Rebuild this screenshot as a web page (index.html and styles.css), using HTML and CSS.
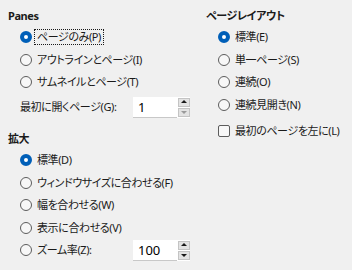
FILE: index.html
```html
<!DOCTYPE html>
<html lang="ja">
<head>
  <meta charset="UTF-8">
  <title>表示オプション</title>
  <link rel="stylesheet" href="styles.css">
</head>
<body>
  <div class="dialog">
    <div class="col">
      <div class="group">
        <h3>Panes</h3>
        <label class="opt"><span class="radio on"></span><span class="txt focus">ページのみ(P)</span></label>
        <label class="opt"><span class="radio"></span><span class="txt">アウトラインとページ(I)</span></label>
        <label class="opt"><span class="radio"></span><span class="txt">サムネイルとページ(T)</span></label>
        <div class="opt spin-row">
          <span class="txt">最初に開くページ(G):</span>
          <div class="spin">
            <span class="spin-val">1</span>
            <span class="spin-btns">
              <span class="up"></span>
              <span class="down off"></span>
            </span>
          </div>
        </div>
      </div>
      <div class="group zoom">
        <h3>拡大</h3>
        <label class="opt"><span class="radio on"></span><span class="txt">標準(D)</span></label>
        <label class="opt"><span class="radio"></span><span class="txt">ウィンドウサイズに合わせる(F)</span></label>
        <label class="opt"><span class="radio"></span><span class="txt">幅を合わせる(W)</span></label>
        <label class="opt"><span class="radio"></span><span class="txt">表示に合わせる(V)</span></label>
        <label class="opt"><span class="radio"></span><span class="txt">ズーム率(Z):</span>
          <div class="spin">
            <span class="spin-val">100</span>
            <span class="spin-btns">
              <span class="up"></span>
              <span class="down"></span>
            </span>
          </div>
        </label>
      </div>
    </div>
    <div class="col">
      <div class="group">
        <h3>ページレイアウト</h3>
        <label class="opt"><span class="radio on"></span><span class="txt">標準(E)</span></label>
        <label class="opt"><span class="radio"></span><span class="txt">単一ページ(S)</span></label>
        <label class="opt"><span class="radio"></span><span class="txt">連続(O)</span></label>
        <label class="opt"><span class="radio"></span><span class="txt">連続見開き(N)</span></label>
        <label class="opt check-row"><span class="check"></span><span class="txt">最初のページを左に(L)</span></label>
      </div>
    </div>
  </div>
</body>
</html>
```

FILE: styles.css
```css
/* dialog base */
body {
  margin: 0;
  padding: 8px;
  background: #f0f0f0;
  color: #1a1a1a;
  font-family: "Noto Sans", "Noto Sans CJK JP", sans-serif;
  font-size: 11px;
  letter-spacing: -0.4px;
  font-feature-settings: "palt";
}
.dialog {
  display: grid;
  grid-template-columns: 182px 1fr;
  column-gap: 16px;
}
h3 {
  margin: 0 0 2px 0;
  height: 16px;
  line-height: 16px;
  font-size: 11px;
  font-weight: bold;
}
.zoom {
  margin-top: 13px;
}

/* option rows */
.opt {
  display: flex;
  align-items: center;
  height: 22.5px;
  padding-left: 12px;
}
.txt {
  line-height: 14px;
  white-space: nowrap;
}
.focus {
  outline: 1px dotted #1a1a1a;
  outline-offset: 0;
  padding: 0 2px;
  margin-left: -2px;
}
.radio {
  width: 10px;
  height: 10px;
  border: 1px solid #5c5c5c;
  border-radius: 50%;
  background: #f7f7f7;
  margin-right: 5px;
  flex-shrink: 0;
}
.radio.on {
  width: 4px;
  height: 4px;
  border: 4px solid #005fb8;
  background: #ffffff;
}
.check {
  width: 10px;
  height: 10px;
  border: 1px solid #5c5c5c;
  border-radius: 2px;
  background: #f7f7f7;
  margin-right: 5px;
}
.check-row {
  margin-top: 4px;
  height: 22px;
}
.spin-row {
  height: 22px;
  margin-top: 2.5px;
}

/* number spinner */
.spin {
  margin-left: auto;
  display: flex;
  height: 21px;
}
.spin-val {
  width: 39px;
  padding-left: 5px;
  background: #ffffff;
  border-bottom: 1px solid #c8c8c8;
  line-height: 20px;
  font-size: 13px;
  letter-spacing: 0;
  color: #000;
}
.spin-btns {
  width: 13px;
  display: flex;
  flex-direction: column;
  background: #ffffff;
}
.spin-btns span {
  flex: 1;
  margin: 1px 0 0 1px;
  background: #e3e3e3;
  border: 1px solid #c4c4c4;
  position: relative;
}
.spin-btns .down {
  margin-bottom: 1px;
}
.spin-btns span::after {
  content: "";
  position: absolute;
  left: 50%;
  top: 50%;
  margin-left: -3px;
  border-left: 3px solid transparent;
  border-right: 3px solid transparent;
}
.spin-btns .up::after {
  margin-top: -2px;
  border-bottom: 3px solid #1a1a1a;
}
.spin-btns .down::after {
  margin-top: -1px;
  border-top: 3px solid #1a1a1a;
}
.spin-btns .down.off::after {
  border-top-color: #9a9a9a;
}
```
